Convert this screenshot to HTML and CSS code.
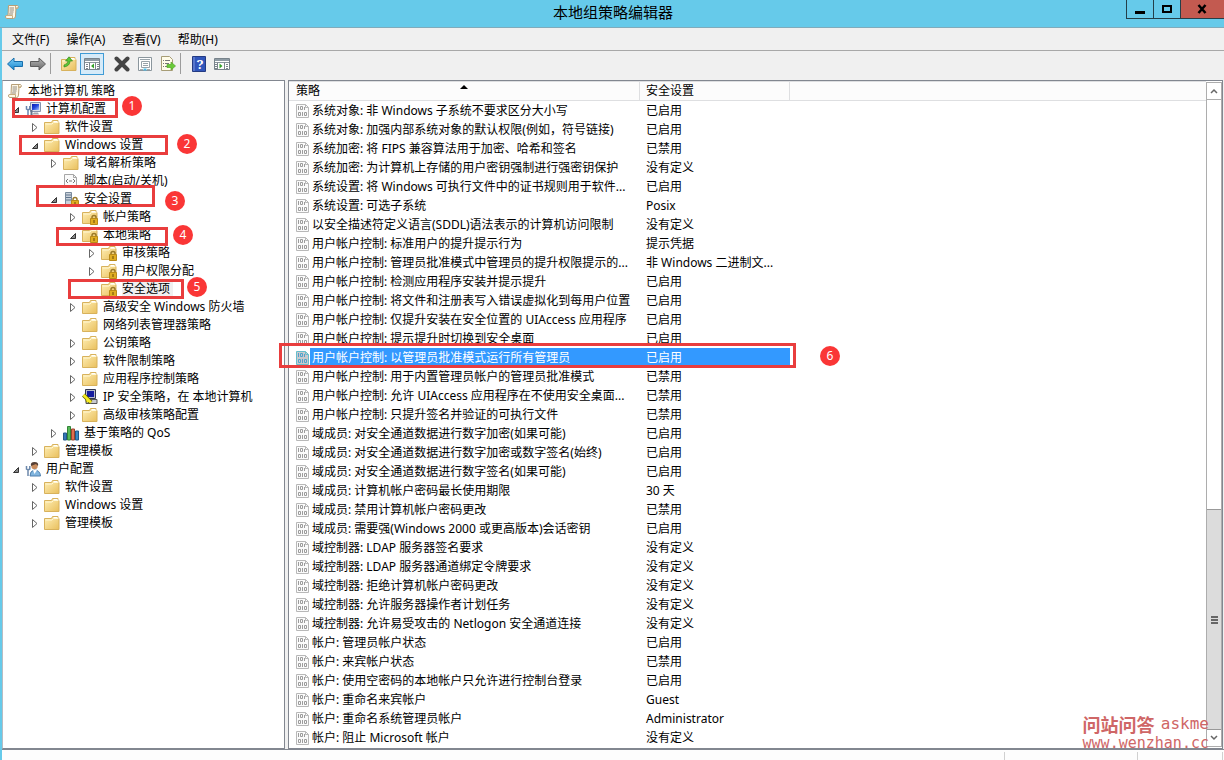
FILE: index.html
```html
<!DOCTYPE html>
<html lang="zh-CN">
<head>
<meta charset="utf-8">
<title>本地组策略编辑器</title>
<link rel="stylesheet" href="styles.css">
</head>
<body>
<svg class="sprite" aria-hidden="true">
  <defs>
    <linearGradient id="fold" x1="0" y1="0" x2="1" y2="1"><stop offset="0" stop-color="#fff0b8"/><stop offset="1" stop-color="#e9bf5c"/></linearGradient>
    <linearGradient id="blue" x1="0" y1="0" x2="0" y2="1"><stop offset="0" stop-color="#7fd0f8"/><stop offset="1" stop-color="#1683cc"/></linearGradient>
    <linearGradient id="gray" x1="0" y1="0" x2="0" y2="1"><stop offset="0" stop-color="#b5b5b5"/><stop offset="1" stop-color="#686868"/></linearGradient>
    <linearGradient id="screen" x1="0" y1="0" x2="1" y2="1"><stop offset="0" stop-color="#0716b0"/><stop offset=".5" stop-color="#2448dc"/><stop offset="1" stop-color="#a8c9ff"/></linearGradient>
  </defs>
  <symbol id="folder" viewBox="0 0 16 16"><path d="M.5 3.500h7l1-2h5.500v2h1v11H.5z" fill="url(#fold)" stroke="#d8b25c"/><path d="M1.500 5h6.500l1.500-1.500h5" fill="none" stroke="#fff7d4"/><path d="M9.500 2.500h4" stroke="#fff"/></symbol>
  <symbol id="lock" viewBox="0 0 16 16"><path d="M10 10V8.500a2 2 0 0 1 4 0V10" fill="none" stroke="#9b7a29" stroke-width="1.500"/><path d="M8.500 9.500h7v6h-7z" fill="#e0ad22" stroke="#b98a18"/><path d="M12 11v3" stroke="#6b4b06"/></symbol>
  <symbol id="scroll" viewBox="0 0 16 16"><path d="M4.500 1.500h9q1.500 1 .5 2.500h-2L11.500 12q0 2.500-2 2.500H2.500Q.5 13 2 11.500h2z" fill="#fff8e7" stroke="#b79f78"/><path d="M11.500 2v2.500h2.500M2 11.500h6.500V14" fill="none" stroke="#c9af82"/><path d="M5.500 4h4.500M5.500 6h4.500M5.500 8h4M5 10h4" stroke="#918a80"/></symbol>
  <symbol id="computer" viewBox="0 0 16 16"><path d="M5.500 1.500h10v9h-10z" fill="#dce1eb" stroke="#8794ac"/><path d="M7 3h7v6H7z" fill="url(#screen)"/><path d="M7 13.500h7l-1-2H9z" fill="#a2a6af"/><path d="M1.500 5v3l1.500 1v6M4.800 5v3L3 9" fill="none" stroke="#6985ad" stroke-width="1.500"/><path d="M6.500 9v6" stroke="#65758c" stroke-width="2"/></symbol>
  <symbol id="user" viewBox="0 0 16 16"><path d="M5 15q0-5 4-6 6 0 6.500 6z" fill="#82b6df" stroke="#4e7fad"/><path d="M8 9l1.500 4L12 9z" fill="#fff"/><circle cx="9.500" cy="5" r="3.200" fill="#c98c5d"/><path d="M6 5q-1-4 3.500-4T13 5L11 3z" fill="#564035"/><path d="M1.500 5v3l1.500 1v6M4.800 5v3L3 9" fill="none" stroke="#6c88ab" stroke-width="1.500"/></symbol>
  <symbol id="script" viewBox="0 0 16 16"><path d="M1.500 1.500h9l3 3v10h-12z" fill="#fafafa" stroke="#a7a7a7"/><path d="M10.500 1.500v3h3M3 12.500h9" fill="none" stroke="#a7a7a7"/><path d="M5 6L3 8l2 2M10 6l2 2-2 2M6 8h3" fill="none" stroke="#777"/></symbol>
  <symbol id="server" viewBox="0 0 16 16"><path d="M2.500 1.500h6v12h-6z" fill="#c9d1da" stroke="#78899b"/><path d="M3 4h5M3 6.500h5M3 9h5" stroke="#60758d"/><use href="#lock"/></symbol>
  <symbol id="locked" viewBox="0 0 16 16"><use href="#folder"/><use href="#lock"/></symbol>
  <symbol id="ipsec" viewBox="0 0 16 16"><path d="M3.500 .5h10v9h-10z" fill="#b8bccb" stroke="#333850"/><path d="M5 2h7v6H5z" fill="#151c9f"/><path d="M4 10.500h11v4H4z" fill="#c9cad0" stroke="#555"/><path d="M1.500 6l7.500 7.500M5 9.500l1 3.500" stroke="#615e00" stroke-width="4"/><path d="M1.500 6l7.500 7.500M5 9.500l1 3.500" stroke="#f7ec22" stroke-width="2.500"/></symbol>
  <symbol id="bars" viewBox="0 0 16 16"><path d="M.5 8h3v7h-3z" fill="#3475b8" stroke="#235887"/><path d="M4.500 1.500h3V15h-3z" fill="#56b957" stroke="#328337"/><path d="M8.500 4h3v11h-3z" fill="#df7050" stroke="#9b432e"/><path d="M12.500 6h3v9h-3z" fill="#388bc5" stroke="#215a8a"/></symbol>
  <symbol id="policy" viewBox="0 0 14 14"><path d="M.5 .5h9l3 3v10H.5z" fill="#fbfbfb" stroke="#b8b8b8"/><path d="M9.500 .5v3h3" fill="none" stroke="#b8b8b8"/><g fill="none" stroke="#9c9c9c"><path d="M2.500 2v4M4.500 2.500h2v3h-2zM8.500 3v3M2.500 8.500h2v3h-2zM6.500 8v4M8.500 8.500h2v3h-2z"/></g></symbol>
  <symbol id="open" viewBox="0 0 8 10"><path d="M6.500 3.500v5h-5z" fill="#888" stroke="#333"/></symbol>
  <symbol id="closed" viewBox="0 0 8 10"><path d="M1.500 1.500v8L6 5.500z" fill="#fff" stroke="#666"/></symbol>
  <symbol id="console" viewBox="0 0 16 16"><path d="M.5 2.500h15v11H.5z" fill="#fff" stroke="#78838b"/><path d="M1 3h14v2H1z" fill="#8e9ba4"/><path d="M1 6.500h14" stroke="#8b969d"/></symbol>
</svg>

<div class="window">
  <header class="titlebar">
    <svg class="icon app-icon"><use href="#scroll"/></svg>
    <h1 class="title">本地组策略编辑器</h1>
    <div class="window-buttons">
      <button class="winbtn minimize" aria-label="最小化"><svg width="10" height="10"><path d="M0 7h10v3H0z"/></svg></button>
      <button class="winbtn maximize" aria-label="最大化"><svg width="10" height="10"><path d="M1 2h8v6H1z" fill="none" stroke="#000" stroke-width="2"/></svg></button>
      <button class="winbtn close" aria-label="关闭"><svg width="10" height="10"><path d="M1.500 1l7 8M8.500 1l-7 8" stroke="#000" stroke-width="2.500"/></svg></button>
    </div>
  </header>
  <nav class="menubar">
    <button>文件(F)</button><button>操作(A)</button><button>查看(V)</button><button>帮助(H)</button>
  </nav>
  <div class="toolbar">
    <button aria-label="后退"><svg class="icon"><path d="M.5 8L7 2v3.500h8.500v5H7V14z" fill="url(#blue)" stroke="#176eac"/></svg></button>
    <button aria-label="前进"><svg class="icon"><path d="M15.500 8L9 2v3.500H.5v5H9V14z" fill="url(#gray)" stroke="#5c5c5c"/></svg></button>
    <span class="divider"></span>
    <button aria-label="上一级"><svg class="icon"><use href="#folder"/><path d="M3 11q6-1 6-6h2.500L8 .8 4.500 5H7q0 3-4 4z" fill="#59c835" stroke="#37881d" stroke-width=".7"/></svg></button>
    <button class="pressed" aria-label="显示控制台树"><svg class="icon"><use href="#console"/><path d="M5.500 6.500v7M11.500 6.500v7M2 8.500h2M2 10.500h2M2 12.500h2M13 8.500h2M13 10.500h2M13 12.500h2" stroke="#7c868d"/><path d="M10 7.500v5L7 10z" fill="#35a42a"/></svg></button>
    <button aria-label="删除"><svg class="icon"><path d="M2.500 2.500l11 11M13.500 2.500l-11 11" stroke="#444" stroke-width="4" stroke-linecap="round"/></svg></button>
    <button aria-label="属性"><svg class="icon"><path d="M1.500 1.500h13v13h-13z" fill="#fff" stroke="#8b969d"/><path d="M3 3.500h10M4.500 5.500h8v6h-8zM6 7.500h5M6 9.500h5" fill="none" stroke="#98a3aa"/><path d="M3 13.500h3M10 13.500h3" stroke="#aaa"/><path d="M6.500 13.500h3" stroke="#49bce8" stroke-width="2"/></svg></button>
    <button aria-label="导出列表"><svg class="icon"><path d="M1.500 .5h8l3 3v11h-11z" fill="#fffce9" stroke="#a79d76"/><path d="M3 4.500h1M5 4.500h5M3 7.500h1M5 7.500h4M3 10.500h1M5 10.500h3" stroke="#777"/><path d="M7 8.500h4V6l4.500 4-4.500 4v-2.500H7z" fill="#68ca38" stroke="#55a52a" stroke-width=".7"/></svg></button>
    <span class="divider"></span>
    <button aria-label="帮助"><svg class="icon"><path d="M1.500 .5h13v15h-13z" fill="#3156bb" stroke="#243b83"/><path d="M3 1v14" stroke="#8097dc"/><text class="help-mark" x="9" y="13" text-anchor="middle">?</text></svg></button>
    <button aria-label="显示操作窗格"><svg class="icon"><use href="#console"/><path d="M3.500 6.500v7M10.500 6.500v7M1 8.500h2M1 10.500h2M1 12.500h2M12 8.500h2M12 10.500h2M12 12.500h2" stroke="#7c868d"/><path d="M5.500 7.500v5l3-2.500z" fill="#35a42a"/></svg></button>
  </div>

  <main class="panes">
    <nav class="tree" aria-label="控制台树">
      <ul class="root">
        <li><button class="node"><svg class="icon"><use href="#scroll"/></svg>本地计算机 策略</button>
        <ul class="top">
          <li><button class="node"><svg class="arrow"><use href="#open"/></svg><svg class="icon"><use href="#computer"/></svg>计算机配置</button>
          <ul>
            <li><button class="node"><svg class="arrow"><use href="#closed"/></svg><svg class="icon"><use href="#folder"/></svg>软件设置</button></li>
            <li><button class="node"><svg class="arrow"><use href="#open"/></svg><svg class="icon"><use href="#folder"/></svg>Windows 设置</button>
            <ul>
              <li><button class="node"><svg class="arrow"><use href="#closed"/></svg><svg class="icon"><use href="#folder"/></svg>域名解析策略</button></li>
              <li><button class="node"><span class="arrow"></span><svg class="icon"><use href="#script"/></svg>脚本(启动/关机)</button></li>
              <li><button class="node"><svg class="arrow"><use href="#open"/></svg><svg class="icon"><use href="#server"/></svg>安全设置</button>
              <ul>
                <li><button class="node"><svg class="arrow"><use href="#closed"/></svg><svg class="icon"><use href="#locked"/></svg>帐户策略</button></li>
                <li><button class="node"><svg class="arrow"><use href="#open"/></svg><svg class="icon"><use href="#locked"/></svg>本地策略</button>
                <ul>
                  <li><button class="node"><svg class="arrow"><use href="#closed"/></svg><svg class="icon"><use href="#locked"/></svg>审核策略</button></li>
                  <li><button class="node"><svg class="arrow"><use href="#closed"/></svg><svg class="icon"><use href="#locked"/></svg>用户权限分配</button></li>
                  <li><button class="node"><span class="arrow"></span><svg class="icon"><use href="#locked"/></svg><span class="current">安全选项</span></button></li>
                </ul></li>
                <li><button class="node"><svg class="arrow"><use href="#closed"/></svg><svg class="icon"><use href="#folder"/></svg>高级安全 Windows 防火墙</button></li>
                <li><button class="node"><span class="arrow"></span><svg class="icon"><use href="#folder"/></svg>网络列表管理器策略</button></li>
                <li><button class="node"><svg class="arrow"><use href="#closed"/></svg><svg class="icon"><use href="#folder"/></svg>公钥策略</button></li>
                <li><button class="node"><svg class="arrow"><use href="#closed"/></svg><svg class="icon"><use href="#folder"/></svg>软件限制策略</button></li>
                <li><button class="node"><svg class="arrow"><use href="#closed"/></svg><svg class="icon"><use href="#folder"/></svg>应用程序控制策略</button></li>
                <li><button class="node"><svg class="arrow"><use href="#closed"/></svg><svg class="icon"><use href="#ipsec"/></svg>IP 安全策略，在 本地计算机</button></li>
                <li><button class="node"><svg class="arrow"><use href="#closed"/></svg><svg class="icon"><use href="#folder"/></svg>高级审核策略配置</button></li>
              </ul></li>
              <li><button class="node"><svg class="arrow"><use href="#closed"/></svg><svg class="icon"><use href="#bars"/></svg>基于策略的 QoS</button></li>
            </ul></li>
            <li><button class="node"><svg class="arrow"><use href="#closed"/></svg><svg class="icon"><use href="#folder"/></svg>管理模板</button></li>
          </ul></li>
          <li><button class="node"><svg class="arrow"><use href="#open"/></svg><svg class="icon"><use href="#user"/></svg>用户配置</button>
          <ul>
            <li><button class="node"><svg class="arrow"><use href="#closed"/></svg><svg class="icon"><use href="#folder"/></svg>软件设置</button></li>
            <li><button class="node"><svg class="arrow"><use href="#closed"/></svg><svg class="icon"><use href="#folder"/></svg>Windows 设置</button></li>
            <li><button class="node"><svg class="arrow"><use href="#closed"/></svg><svg class="icon"><use href="#folder"/></svg>管理模板</button></li>
          </ul></li>
        </ul></li>
      </ul>
    </nav>

    <section class="list">
      <table class="policies">
        <colgroup><col class="col-name"><col class="col-value"><col></colgroup>
        <thead><tr><th>策略<svg class="sort" width="8" height="4"><path d="M0 4l4-4 4 4z"/></svg></th><th>安全设置</th><th></th></tr></thead>
        <tbody>
          <tr><td><div class="name"><svg><use href="#policy"/></svg><span>系统对象: 非 Windows 子系统不要求区分大小写</span></div></td><td>已启用</td><td></td></tr>
          <tr><td><div class="name"><svg><use href="#policy"/></svg><span>系统对象: 加强内部系统对象的默认权限(例如，符号链接)</span></div></td><td>已启用</td><td></td></tr>
          <tr><td><div class="name"><svg><use href="#policy"/></svg><span>系统加密: 将 FIPS 兼容算法用于加密、哈希和签名</span></div></td><td>已禁用</td><td></td></tr>
          <tr><td><div class="name"><svg><use href="#policy"/></svg><span>系统加密: 为计算机上存储的用户密钥强制进行强密钥保护</span></div></td><td>没有定义</td><td></td></tr>
          <tr><td><div class="name"><svg><use href="#policy"/></svg><span>系统设置: 将 Windows 可执行文件中的证书规则用于软件...</span></div></td><td>已启用</td><td></td></tr>
          <tr><td><div class="name"><svg><use href="#policy"/></svg><span>系统设置: 可选子系统</span></div></td><td>Posix</td><td></td></tr>
          <tr><td><div class="name"><svg><use href="#policy"/></svg><span>以安全描述符定义语言(SDDL)语法表示的计算机访问限制</span></div></td><td>没有定义</td><td></td></tr>
          <tr><td><div class="name"><svg><use href="#policy"/></svg><span>用户帐户控制: 标准用户的提升提示行为</span></div></td><td>提示凭据</td><td></td></tr>
          <tr><td><div class="name"><svg><use href="#policy"/></svg><span>用户帐户控制: 管理员批准模式中管理员的提升权限提示的...</span></div></td><td>非 Windows 二进制文...</td><td></td></tr>
          <tr><td><div class="name"><svg><use href="#policy"/></svg><span>用户帐户控制: 检测应用程序安装并提示提升</span></div></td><td>已启用</td><td></td></tr>
          <tr><td><div class="name"><svg><use href="#policy"/></svg><span>用户帐户控制: 将文件和注册表写入错误虚拟化到每用户位置</span></div></td><td>已启用</td><td></td></tr>
          <tr><td><div class="name"><svg><use href="#policy"/></svg><span>用户帐户控制: 仅提升安装在安全位置的 UIAccess 应用程序</span></div></td><td>已启用</td><td></td></tr>
          <tr><td><div class="name"><svg><use href="#policy"/></svg><span>用户帐户控制: 提示提升时切换到安全桌面</span></div></td><td>已启用</td><td></td></tr>
          <tr class="selected"><td><div class="name"><svg><use href="#policy"/></svg><span>用户帐户控制: 以管理员批准模式运行所有管理员</span></div></td><td>已启用</td><td></td></tr>
          <tr><td><div class="name"><svg><use href="#policy"/></svg><span>用户帐户控制: 用于内置管理员帐户的管理员批准模式</span></div></td><td>已禁用</td><td></td></tr>
          <tr><td><div class="name"><svg><use href="#policy"/></svg><span>用户帐户控制: 允许 UIAccess 应用程序在不使用安全桌面...</span></div></td><td>已禁用</td><td></td></tr>
          <tr><td><div class="name"><svg><use href="#policy"/></svg><span>用户帐户控制: 只提升签名并验证的可执行文件</span></div></td><td>已禁用</td><td></td></tr>
          <tr><td><div class="name"><svg><use href="#policy"/></svg><span>域成员: 对安全通道数据进行数字加密(如果可能)</span></div></td><td>已启用</td><td></td></tr>
          <tr><td><div class="name"><svg><use href="#policy"/></svg><span>域成员: 对安全通道数据进行数字加密或数字签名(始终)</span></div></td><td>已启用</td><td></td></tr>
          <tr><td><div class="name"><svg><use href="#policy"/></svg><span>域成员: 对安全通道数据进行数字签名(如果可能)</span></div></td><td>已启用</td><td></td></tr>
          <tr><td><div class="name"><svg><use href="#policy"/></svg><span>域成员: 计算机帐户密码最长使用期限</span></div></td><td>30 天</td><td></td></tr>
          <tr><td><div class="name"><svg><use href="#policy"/></svg><span>域成员: 禁用计算机帐户密码更改</span></div></td><td>已禁用</td><td></td></tr>
          <tr><td><div class="name"><svg><use href="#policy"/></svg><span>域成员: 需要强(Windows 2000 或更高版本)会话密钥</span></div></td><td>已启用</td><td></td></tr>
          <tr><td><div class="name"><svg><use href="#policy"/></svg><span>域控制器: LDAP 服务器签名要求</span></div></td><td>没有定义</td><td></td></tr>
          <tr><td><div class="name"><svg><use href="#policy"/></svg><span>域控制器: LDAP 服务器通道绑定令牌要求</span></div></td><td>没有定义</td><td></td></tr>
          <tr><td><div class="name"><svg><use href="#policy"/></svg><span>域控制器: 拒绝计算机帐户密码更改</span></div></td><td>没有定义</td><td></td></tr>
          <tr><td><div class="name"><svg><use href="#policy"/></svg><span>域控制器: 允许服务器操作者计划任务</span></div></td><td>没有定义</td><td></td></tr>
          <tr><td><div class="name"><svg><use href="#policy"/></svg><span>域控制器: 允许易受攻击的 Netlogon 安全通道连接</span></div></td><td>没有定义</td><td></td></tr>
          <tr><td><div class="name"><svg><use href="#policy"/></svg><span>帐户: 管理员帐户状态</span></div></td><td>已启用</td><td></td></tr>
          <tr><td><div class="name"><svg><use href="#policy"/></svg><span>帐户: 来宾帐户状态</span></div></td><td>已禁用</td><td></td></tr>
          <tr><td><div class="name"><svg><use href="#policy"/></svg><span>帐户: 使用空密码的本地帐户只允许进行控制台登录</span></div></td><td>已启用</td><td></td></tr>
          <tr><td><div class="name"><svg><use href="#policy"/></svg><span>帐户: 重命名来宾帐户</span></div></td><td>Guest</td><td></td></tr>
          <tr><td><div class="name"><svg><use href="#policy"/></svg><span>帐户: 重命名系统管理员帐户</span></div></td><td>Administrator</td><td></td></tr>
          <tr><td><div class="name"><svg><use href="#policy"/></svg><span>帐户: 阻止 Microsoft 帐户</span></div></td><td>没有定义</td><td></td></tr>
        </tbody>
      </table>
      <div class="scrollbar">
        <button aria-label="向上滚动"><svg width="8" height="6"><path d="M1 5l3-3 3 3" fill="none" stroke="#666" stroke-width="1.500"/></svg></button>
        <div class="track"></div>
        <div class="thumb"><span></span><span></span><span></span></div>
        <button aria-label="向下滚动"><svg width="8" height="6"><path d="M1 1l3 3 3-3" fill="none" stroke="#666" stroke-width="1.500"/></svg></button>
      </div>
    </section>
  </main>
  <footer class="status"><span class="cell main-cell"></span><span class="cell second-cell"></span><span class="cell third-cell"></span></footer>

  <div class="frame frame-1"></div><div class="frame frame-2"></div><div class="frame frame-3"></div>
  <div class="frame frame-4"></div><div class="frame frame-5"></div><div class="frame frame-6"></div>
  <span class="step step-1">1</span><span class="step step-2">2</span><span class="step step-3">3</span>
  <span class="step step-4">4</span><span class="step step-5">5</span><span class="step step-6">6</span>
  <div class="watermark"><div><b>问站问答</b><span>askme</span></div><div class="site">www.wenzhan.cc</div></div>
</div>
</body>
</html>
```

FILE: styles.css
```css
* { box-sizing: border-box; }
body {
  margin: 0;
  font: 12px/18px "Noto Sans", "Noto Sans CJK SC", sans-serif;
  color: #000;
}
button {
  margin: 0;
  padding: 0;
  border: 0;
  background: none;
  font: inherit;
  color: inherit;
}
ul { margin: 0; padding: 0; list-style: none; }
svg { display: block; flex: none; }
.sprite { position: absolute; width: 0; height: 0; }
.icon { width: 16px; height: 16px; }

.window {
  position: relative;
  display: flex;
  flex-direction: column;
  min-height: 100vh;
  background: #f0f0f0;
  border-left: 2px solid #66caea;
}

.titlebar {
  display: flex;
  justify-content: space-between;
  align-items: flex-start;
  height: 28px;
  margin-left: -2px;
  background: #66caea;
  border-bottom: 1px solid #80abbb;
}
.app-icon { margin: 4px 80px 0 4px; }
.title { margin: 0; font-size: 15px; font-weight: 400; line-height: 24px; }
.window-buttons { display: flex; border: solid #243f49; border-width: 0 0 1px 1px; }
.winbtn {
  display: flex;
  align-items: center;
  justify-content: center;
  width: 27px;
  height: 18px;
  border-right: 1px solid #243f49;
}
.winbtn.close { width: 43px; border-right: 0; background: #c35a50; }

.menubar {
  display: flex;
  gap: 17px;
  height: 23px;
  padding: 1px 0 0 10px;
  border-bottom: 1px solid #a8a8a8;
}
.toolbar {
  display: flex;
  align-items: center;
  height: 29px;
  padding: 0 0 4px 1px;
}
.toolbar button {
  display: flex;
  align-items: center;
  justify-content: center;
  width: 23px;
  height: 22px;
}
.toolbar .pressed { width: 24px; background: #d6ebf9; border: 1px solid #409cd6; margin-right: 6px; }
.toolbar .divider { width: 1px; height: 21px; margin: 0 6px 0 1px; background: #9c9c9c; }
.help-mark { font: bold 13px "Noto Serif", "Liberation Serif", serif; fill: #fff; }

.panes {
  display: grid;
  grid-template-columns: 283px 1fr;
  gap: 3px;
  flex: 1;
  padding-right: 1px;
}
.tree, .list { background: #fff; border: 1px solid #828790; }
.tree { border-left-color: #b8bcc2; padding: 1px 0 0 4px; }
.top { padding-left: 5px; }
.top ul { padding-left: 19px; }
.node {
  display: flex;
  align-items: center;
  height: 18px;
  white-space: nowrap;
}
.node .icon { margin-right: 5px; }
.arrow { width: 8px; height: 10px; margin-right: 5px; }
.current { background: #f0f0f0; height: 18px; padding-right: 3px; }

.list { display: flex; }
.policies {
  flex: 1;
  table-layout: fixed;
  width: 100%;
  border-spacing: 0;
  align-self: flex-start;
}
.col-name { width: 351px; }
.col-value { width: 150px; }
th {
  position: relative;
  height: 20px;
  padding: 0 0 0 7px;
  font-weight: 400;
  text-align: left;
  background: #fcfcfc;
  border: solid #dedfe1;
  border-width: 1px 1px 1px 0;
  line-height: 18px;
}
th:nth-child(2) { padding-left: 6px; }
th:last-child { border-right: 0; }
.sort { position: absolute; left: 171px; top: 3px; }
td { height: 19px; padding: 0 0 0 6px; white-space: nowrap; line-height: 19px; }
td:first-child { padding-left: 7px; }
.name { display: flex; align-items: center; }
.name svg { width: 14px; height: 14px; }
.name span { flex: 1; padding-left: 2px; }
.selected { color: #fff; }
.selected .name span, .selected td:nth-child(2) { background: #3399ff; }
.selected svg { filter: sepia(1) hue-rotate(180deg) saturate(4) brightness(0.8); }

.scrollbar {
  display: flex;
  flex-direction: column;
  width: 16px;
  margin: 1px 0;
  border: 1px solid #adadad;
}
.scrollbar button { display: flex; align-items: center; justify-content: center; height: 16px; }
.track { flex: 411; border-top: 1px solid #adadad; }
.thumb {
  flex: 220;
  display: flex;
  flex-direction: column;
  align-items: center;
  justify-content: center;
  gap: 1px;
  background: #dcdcdc;
  border: solid #999;
  border-width: 1px 0;
}
.thumb span { width: 7px; height: 2px; background: #666; }

.status { display: flex; height: 11px; background: #fdfdfd; border-top: 1px solid #828790; }
.cell { border-right: 1px solid #d0d0d0; margin-top: 2px; }
.main-cell { flex: 1; }
.second-cell { width: 133px; }
.third-cell { width: 85px; margin-right: 1px; }

/* Numbered walkthrough marks laid over the window */
.frame { position: absolute; border: 3px solid #e93d3d; }
.frame-1 { left: 10px; top: 98px; width: 106px; height: 20px; }
.frame-2 { left: 17px; top: 135px; width: 149px; height: 20px; }
.frame-3 { left: 34px; top: 185px; width: 119px; height: 22px; }
.frame-4 { left: 54px; top: 227px; width: 112px; height: 19px; }
.frame-5 { left: 66px; top: 279px; width: 116px; height: 20px; }
.frame-6 { left: 277px; top: 343px; width: 517px; height: 25px; }
.step {
  position: absolute;
  width: 20px;
  height: 20px;
  border-radius: 50%;
  background: #fa3636;
  color: #fff;
  line-height: 20px;
  text-align: center;
}
.step-1 { left: 120px; top: 96px; }
.step-2 { left: 175px; top: 134px; }
.step-3 { left: 163px; top: 191px; }
.step-4 { left: 171px; top: 225px; }
.step-5 { left: 185px; top: 277px; }
.step-6 { left: 818px; top: 346px; }
.watermark {
  position: absolute;
  right: 15px;
  bottom: 8px;
  color: #cf6666;
  font: 16px/20px "DejaVu Sans Mono", monospace;
}
.watermark div { display: flex; justify-content: space-between; align-items: center; }
.watermark b { font: 700 18px/20px "Noto Sans CJK SC", sans-serif; }
.watermark .site { font-size: 15px; line-height: 18px; }
```
